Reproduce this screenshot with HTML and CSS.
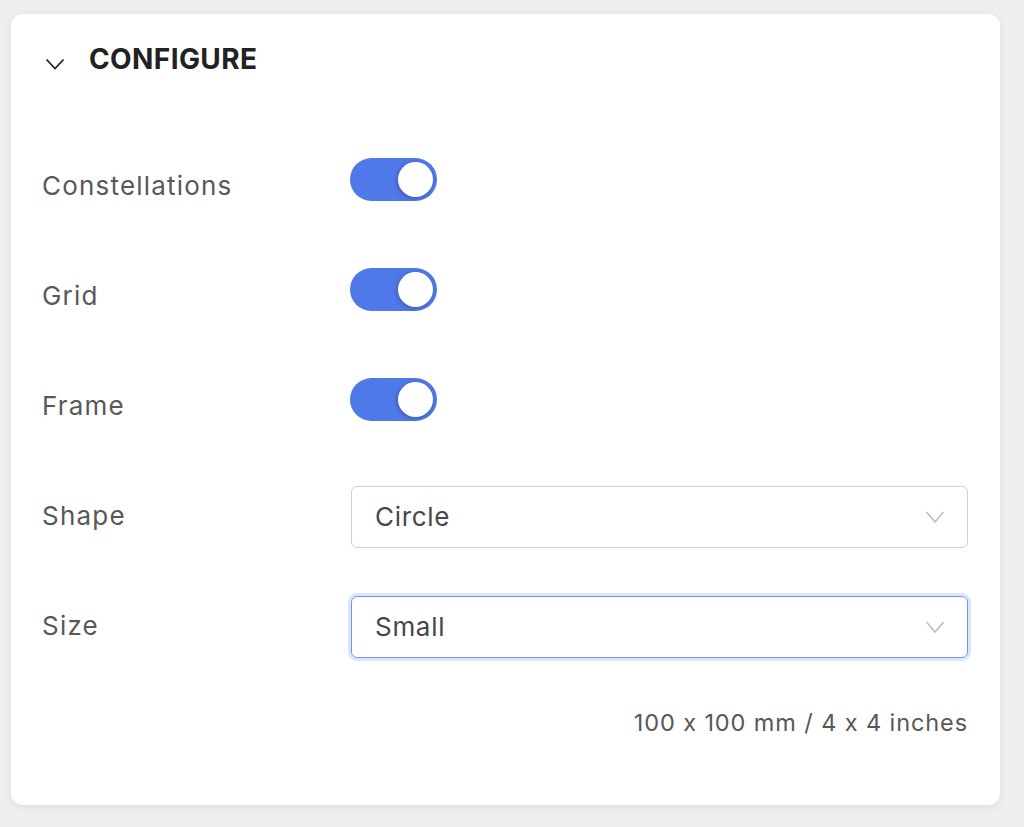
FILE: index.html
```html
<!DOCTYPE html>
<html lang="en">
<head>
  <meta charset="UTF-8" />
  <title>Configure</title>
  <link rel="stylesheet" href="styles.css">
</head>
<body>

  <div class="panel">
    <div class="panel-header">
      <svg class="caret" width="20" height="12" viewBox="0 0 20 12">
        <path d="M1.5 1.5 L10 10.5 L18.5 1.5" fill="none" stroke="#222" stroke-width="1.8" />
      </svg>
      <h2>CONFIGURE</h2>
    </div>

    <div class="rows">
      <div class="row">
        <span class="label">Constellations</span>
        <div class="toggle on"><span class="knob"></span></div>
      </div>
      <div class="row">
        <span class="label">Grid</span>
        <div class="toggle on"><span class="knob"></span></div>
      </div>
      <div class="row">
        <span class="label">Frame</span>
        <div class="toggle on"><span class="knob"></span></div>
      </div>
      <div class="row">
        <span class="label">Shape</span>
        <div class="select">
          <span>Circle</span>
          <svg width="20" height="14" viewBox="0 0 20 14">
            <path d="M1.5 2 L10 12 L18.5 2" fill="none" stroke="#bdbdbd" stroke-width="1.6" />
          </svg>
        </div>
      </div>
      <div class="row">
        <span class="label">Size</span>
        <div class="select focused">
          <span>Small</span>
          <svg width="20" height="14" viewBox="0 0 20 14">
            <path d="M1.5 2 L10 12 L18.5 2" fill="none" stroke="#bdbdbd" stroke-width="1.6" />
          </svg>
        </div>
      </div>
    </div>

    <p class="note">100 x 100 mm / 4 x 4 inches</p>
  </div>

</body>
</html>
```

FILE: styles.css
```css
* {
  box-sizing: border-box;
}

body {
  margin: 0;
  padding: 14px 24px 0 11px;
  height: 827px;
  background: #efefef;
  font-family: 'Inter', 'Noto Sans', sans-serif;
  overflow: hidden;
}

.panel {
  width: 989px;
  height: 791px;
  background: #ffffff;
  border-radius: 12px;
  box-shadow: 0 2px 10px rgba(0, 0, 0, 0.08);
  padding: 27px 32px 0 31px;
}

.panel-header {
  display: flex;
  align-items: center;
  height: 36px;
}

.caret {
  margin-left: 3px;
  margin-top: 10px;
}

.panel-header h2 {
  margin: 0 0 0 24px;
  font-size: 28px;
  font-weight: 700;
  color: #222222;
  letter-spacing: 0.4px;
}

.rows {
  display: flex;
  flex-direction: column;
  gap: 48px;
  margin-top: 77px;
}

.row {
  display: flex;
  align-items: center;
  height: 62px;
}

.label {
  width: 308px;
  flex-shrink: 0;
  font-size: 26px;
  color: #585858;
  letter-spacing: 1.2px;
}

.toggle {
  width: 87px;
  height: 43px;
  margin-bottom: 11px;
  border-radius: 22px;
  background: #4f78e8;
  display: flex;
  align-items: center;
  justify-content: flex-end;
  padding: 0 4px;
}

.knob {
  width: 35px;
  height: 35px;
  border-radius: 50%;
  background: #ffffff;
  box-shadow: -1px 1px 4px rgba(0, 0, 0, 0.25);
}

.select {
  flex: 1;
  height: 62px;
  margin: 3px 0 0 1px;
  border: 1.5px solid #cfcfcf;
  border-radius: 6px;
  display: flex;
  align-items: center;
  justify-content: space-between;
  padding: 0 22px 0 23px;
  font-size: 26px;
  color: #474747;
  letter-spacing: 0.7px;
}

.select.focused {
  border: 1.5px solid #6f96f0;
  box-shadow: 0 0 0 3px #dbe5fb;
}

.note {
  margin: 53px 0 0;
  text-align: right;
  font-size: 23.5px;
  line-height: 28px;
  color: #585858;
  letter-spacing: 0.9px;
}
```
